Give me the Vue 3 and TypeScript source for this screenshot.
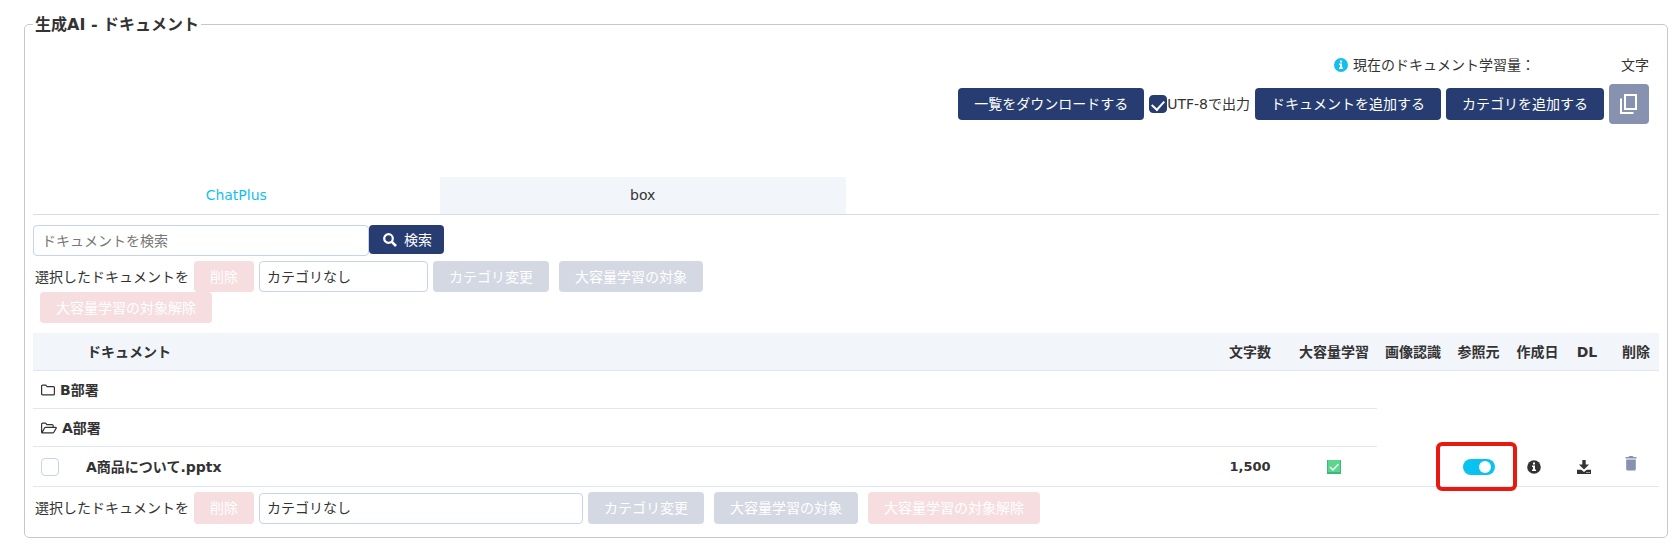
<script setup lang="ts">
import { ref } from 'vue'

interface BulkBar {
  selected: string
}

const utf8 = ref(true)
const keyword = ref('')
const checked = ref(false)
const showSource = ref(true)
const top = ref<BulkBar>({ selected: 'none' })
const bottom = ref<BulkBar>({ selected: 'none' })
</script>

<template>
  <fieldset class="panel">
    <legend>生成AI - ドキュメント</legend>

    <div class="usage">
      <svg class="info" viewBox="0 0 14 14" width="14" height="14" aria-hidden="true">
        <circle cx="7" cy="7" r="7" fill="#14bfec" />
        <path d="M6 2.5h2v2H6zM5 5.5h3v4h1v1.5H5V9.500h1V7H5z" fill="#fff" />
      </svg>
      <span>現在のドキュメント学習量：</span>
      <span class="unit">文字</span>
    </div>

    <div class="actions">
      <button type="button" class="btn primary">一覧をダウンロードする</button>
      <label class="utf"><input v-model="utf8" type="checkbox" class="check" />UTF-8で出力</label>
      <button type="button" class="btn primary">ドキュメントを追加する</button>
      <button type="button" class="btn primary">カテゴリを追加する</button>
      <button type="button" class="copy" aria-label="コピー">
        <svg viewBox="0 0 18 20" width="18" height="20" fill="none" stroke="#fff" stroke-width="2">
          <path d="M5 1h11v14H5zM1 4.500V19h12.500" />
        </svg>
      </button>
    </div>

    <nav class="tabs">
      <a href="#chatplus" class="tab active">ChatPlus</a>
      <a href="#box" class="tab">box</a>
    </nav>

    <form class="search" @submit.prevent>
      <input v-model="keyword" type="text" class="field" placeholder="ドキュメントを検索" aria-label="ドキュメントを検索" />
      <button type="submit" class="btn primary find">
        <svg viewBox="0 0 14 14" width="14" height="14" fill="none" stroke="#fff" aria-hidden="true">
          <circle cx="5.500" cy="5.500" r="4.300" stroke-width="2.200" />
          <path d="M8.800 8.800L13 13" stroke-width="2.600" />
        </svg>
        検索
      </button>
    </form>

    <div class="bulk narrow">
      <span class="lead">選択したドキュメントを</span>
      <button type="button" class="btn danger" disabled>削除</button>
      <select v-model="top.selected" class="field" aria-label="カテゴリ">
        <option value="none">カテゴリなし</option>
      </select>
      <button type="button" class="btn muted" disabled>カテゴリ変更</button>
      <button type="button" class="btn muted apart" disabled>大容量学習の対象</button>
      <button type="button" class="btn danger release" disabled>大容量学習の対象解除</button>
    </div>

    <table class="docs">
      <colgroup>
        <col class="c-check" /><col /><col class="c-count" /><col class="c-large" /><col class="c-image" />
        <col class="c-mid" /><col class="c-mid" /><col class="c-dl" /><col class="c-del" />
      </colgroup>
      <thead>
        <tr>
          <th></th>
          <th class="name">ドキュメント</th>
          <th>文字数</th>
          <th>大容量学習</th>
          <th>画像認識</th>
          <th>参照元</th>
          <th>作成日</th>
          <th>DL</th>
          <th class="end">削除</th>
        </tr>
      </thead>
      <tbody>
        <tr>
          <td colspan="4" class="folder">
            <div class="folder-line">
              <svg viewBox="0 0 14 12" width="14" height="12" fill="none" stroke="#333" stroke-width="1.200" stroke-linejoin="round">
                <path d="M.6 2.100Q.6 1.100 1.600 1.100H4.800L6.100 2.600H12.400Q13.400 2.600 13.400 3.600V9.900Q13.400 10.900 12.400 10.900H1.600Q.6 10.900.6 9.900z" />
              </svg>
              <span>B部署</span>
            </div>
          </td>
        </tr>
        <tr>
          <td colspan="4" class="folder">
            <div class="folder-line">
              <svg viewBox="0 0 16 12" width="16" height="12" fill="none" stroke="#333" stroke-width="1.200" stroke-linejoin="round">
                <path d="M.6 9.800V2.100Q.6 1.100 1.600 1.100H4.600L5.900 2.600H11Q12.200 2.600 12.200 3.800V5.200M1 10.600L3.500 6Q3.900 5.300 4.700 5.300H14.600Q15.600 5.300 15.200 6.100L13 10Q12.500 10.900 11.700 10.900H1.300Q.6 10.900.6 9.800" />
              </svg>
              <span>A部署</span>
            </div>
          </td>
        </tr>
        <tr class="doc">
          <td class="pick"><input v-model="checked" type="checkbox" class="check" aria-label="A商品について.pptxを選択" /></td>
          <td class="name">A商品について.pptx</td>
          <td class="num">1,500</td>
          <td>
            <svg viewBox="0 0 14 14" width="14" height="14" role="img" aria-label="対象">
              <path d="M0 0h14v14H0z" fill="#3fb778" />
              <path d="M1 0h12v12H1z" fill="#5bd68d" />
              <path d="M3 7l3 3 5.500-6" fill="none" stroke="#fff" stroke-width="1.400" />
            </svg>
          </td>
          <td></td>
          <td>
            <span class="marked"><input v-model="showSource" type="checkbox" role="switch" class="switch" aria-label="参照元" /></span>
          </td>
          <td class="date">
            <svg viewBox="0 0 14 14" width="14" height="14" role="img" aria-label="作成日">
              <circle cx="7" cy="7" r="6.800" fill="#333" />
              <path d="M6 2.500h2v2H6zM5 5.500h3v4h1v1.500H5V9.500h1V7H5z" fill="#fff" />
            </svg>
          </td>
          <td class="dl">
            <button type="button" class="icon" aria-label="ダウンロード">
              <svg viewBox="0 0 14 14" width="14" height="14" fill="#333">
                <path d="M5.300 0h3.400v4.600H12L7 9.400 2 4.600h3.300zM0 9.800h4.300L7 12.100l2.700-2.300H14V14H0z" />
                <path d="M9.500 12h1v1h-1zM11.600 12h1v1h-1z" fill="#fff" />
              </svg>
            </button>
          </td>
          <td class="trash">
            <button type="button" class="icon" aria-label="削除">
              <svg viewBox="0 0 12 15" width="12" height="15" fill="#8791b0">
                <path d="M.5 1h3L4.300 0h3.400l.8 1h3v1.500H.5zM1.200 3.500h9.600V13q0 1.500-1.500 1.500H2.700Q1.200 14.500 1.200 13z" />
              </svg>
            </button>
          </td>
        </tr>
      </tbody>
    </table>

    <div class="bulk wide">
      <span class="lead">選択したドキュメントを</span>
      <button type="button" class="btn danger" disabled>削除</button>
      <select v-model="bottom.selected" class="field" aria-label="カテゴリ">
        <option value="none">カテゴリなし</option>
      </select>
      <button type="button" class="btn muted" disabled>カテゴリ変更</button>
      <button type="button" class="btn muted apart" disabled>大容量学習の対象</button>
      <button type="button" class="btn danger apart" disabled>大容量学習の対象解除</button>
    </div>
  </fieldset>
</template>

<style>
body {
  background: #fff;
}
</style>

<style scoped>
* {
  box-sizing: border-box;
}
.panel,
.panel button,
.panel input,
.panel select {
  font-family: "DejaVu Sans", "Noto Sans CJK JP", sans-serif;
  font-size: 14px;
  line-height: 20px;
  color: #333;
}
.panel {
  margin: 14px 10px 0 24px;
  padding: 0 8px 13px;
  border: 1px solid #c8c8c8;
  border-radius: 5px;
  min-width: 0;
}
legend {
  padding: 0 2px;
  font-size: 16px;
  line-height: 21px;
  font-weight: bold;
}
.usage {
  display: flex;
  justify-content: flex-end;
  align-items: center;
  gap: 5px;
  padding: 20px 10px 0 0;
}
.unit {
  margin-left: 81px;
}
.actions {
  display: flex;
  justify-content: flex-end;
  align-items: center;
  gap: 5px;
  padding: 9px 10px 0 0;
}
.btn {
  height: 31px;
  padding: 0 16px;
  border: 0;
  border-radius: 4px;
  white-space: nowrap;
}
.panel .btn {
  color: #fff;
}
.primary {
  background: #273d71;
}
.actions .btn {
  height: 32px;
}
.muted {
  background: #d4d8e3;
}
.danger {
  background: #f6dddf;
}
.utf {
  display: flex;
  align-items: center;
}
.check {
  appearance: none;
  display: block;
  width: 18px;
  height: 18px;
  margin: 0;
  border: 1px solid #c6d3ea;
  border-radius: 4px;
  background: #fff;
}
.check:checked {
  display: flex;
  justify-content: center;
  padding-top: 2px;
  border-color: #273d71;
  background: #273d71;
}
.check:checked::after {
  content: "";
  width: 6px;
  height: 10px;
  border: solid #fff;
  border-width: 0 2px 2px 0;
  transform: rotate(42deg);
}
.copy {
  display: grid;
  place-items: center;
  width: 40px;
  height: 40px;
  padding: 0;
  border: 0;
  border-radius: 4px;
  background: #8791b0;
}
.tabs {
  display: flex;
  margin-top: 53px;
  border-bottom: 1px solid #d9dbdf;
}
.tab {
  width: 25%;
  padding: 8px 0 9px;
  text-align: center;
  text-decoration: none;
  color: #333;
  background: #f2f5fa;
}
.tab.active {
  color: #14bfec;
  background: none;
}
.search {
  display: flex;
  align-items: flex-start;
  margin-top: 10px;
}
.field {
  appearance: none;
  height: 31px;
  margin: 0;
  padding: 0 7px;
  border: 1px solid #c6d3ea;
  border-radius: 4px;
  background: #fff;
}
.search .field {
  width: 336px;
  padding: 0 8px;
}
.field::placeholder {
  color: #777;
  opacity: 1;
}
.panel .find {
  display: flex;
  align-items: center;
  gap: 7px;
  height: 29px;
  padding: 0 12px 0 14px;
}
.bulk {
  display: flex;
  flex-wrap: wrap;
  align-items: center;
  column-gap: 5px;
}
.lead {
  padding-left: 2px;
}
.narrow {
  width: 50%;
  margin-top: 5px;
}
.narrow select {
  width: 169px;
}
.wide {
  margin-top: 5px;
}
.wide .btn {
  height: 32px;
}
.wide select {
  width: 324px;
}
.bulk .apart {
  margin-left: 5px;
}
.bulk .release {
  margin-left: 7px;
}
.docs {
  width: 100%;
  margin-top: 10px;
  table-layout: fixed;
  border-collapse: separate;
  border-spacing: 0;
  font-weight: bold;
}
.c-check { width: 46px; }
.c-count { width: 82px; }
.c-large { width: 86px; }
.c-image { width: 72px; }
.c-mid { width: 59px; }
.c-dl { width: 40px; }
.c-del { width: 52px; }
th,
td {
  padding: 0;
  text-align: center;
  border-bottom: 1px solid #e2e6f0;
  white-space: nowrap;
}
th {
  height: 38px;
  background: #f2f5fa;
}
th.name,
td.name {
  padding-left: 8px;
  text-align: left;
}
td.name {
  padding-left: 7px;
}
th.end {
  padding-right: 9px;
  text-align: right;
}
.folder {
  height: 38px;
  padding-left: 8px;
}
.folder-line {
  display: flex;
  align-items: center;
  gap: 5px;
}
.doc td {
  height: 40px;
}
.doc svg {
  display: block;
  margin: 0 auto;
}
.doc .pick {
  padding-left: 8px;
}
.doc .num {
  font-size: 13px;
}
.doc .date,
.doc .dl {
  padding-right: 8px;
}
.doc .dl {
  padding-right: 6px;
}
.doc .trash {
  padding: 0 22px 6px 0;
}
.icon {
  display: block;
  margin: 0 auto;
  padding: 0;
  border: 0;
  background: none;
}
.trash .icon {
  margin: 0 0 0 auto;
}
.marked {
  position: relative;
  display: block;
  width: 32px;
  margin: 0 auto;
}
.marked::after {
  content: "";
  position: absolute;
  inset: -17px -22px -16px -27px;
  border: 4px solid #e8190f;
  border-radius: 6px;
  pointer-events: none;
}
.switch {
  appearance: none;
  display: flex;
  align-items: center;
  width: 32px;
  height: 16px;
  margin: 0;
  padding: 0 4px;
  border-radius: 8px;
  background: #b8bec9;
}
.switch::after {
  content: "";
  width: 12px;
  height: 12px;
  border-radius: 50%;
  background: #fff;
}
.switch:checked {
  justify-content: flex-end;
  background: #0ac2ef;
}
</style>
